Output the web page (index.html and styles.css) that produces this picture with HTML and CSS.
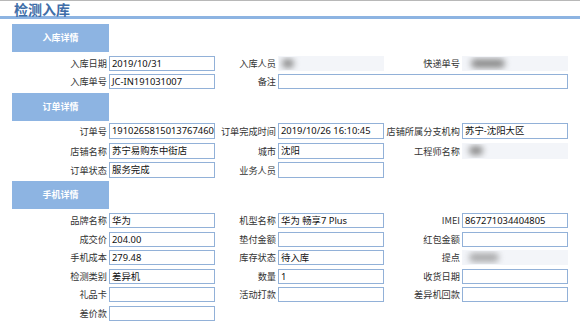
FILE: index.html
```html
<!DOCTYPE html>
<html lang="zh-CN">
<head>
    <meta charset="UTF-8">
    <title>检测入库</title>
    <link rel="stylesheet" href="styles.css">
</head>
<body>

    <div class="title">检测入库</div>

    <div class="section sec-store">
        <div class="sec-head">入库详情</div>
        <div class="grid">
            <span class="lbl">入库日期</span><div class="val">2019/10/31</div>
            <span class="lbl">入库人员</span><div class="val masked"><span class="smudge s1"></span></div>
            <span class="lbl">快递单号</span><div class="val masked"><span class="smudge s2"></span></div>

            <span class="lbl">入库单号</span><div class="val">JC-IN191031007</div>
            <span class="lbl">备注</span><div class="val wide"></div>
        </div>
    </div>

    <div class="section sec-order">
        <div class="sec-head">订单详情</div>
        <div class="grid">
            <span class="lbl">订单号</span><div class="val">1910265815013767460</div>
            <span class="lbl">订单完成时间</span><div class="val">2019/10/26 16:10:45</div>
            <span class="lbl">店铺所属分支机构</span><div class="val">苏宁-沈阳大区</div>

            <span class="lbl">店铺名称</span><div class="val">苏宁易购东中街店</div>
            <span class="lbl">城市</span><div class="val">沈阳</div>
            <span class="lbl">工程师名称</span><div class="val masked"><span class="smudge s3"></span></div>

            <span class="lbl">订单状态</span><div class="val">服务完成</div>
            <span class="lbl">业务人员</span><div class="val"></div>
        </div>
    </div>

    <div class="section sec-phone">
        <div class="sec-head">手机详情</div>
        <div class="grid">
            <span class="lbl">品牌名称</span><div class="val">华为</div>
            <span class="lbl">机型名称</span><div class="val">华为 畅享7 Plus</div>
            <span class="lbl">IMEI</span><div class="val">867271034404805</div>

            <span class="lbl">成交价</span><div class="val">204.00</div>
            <span class="lbl">垫付金额</span><div class="val"></div>
            <span class="lbl">红包金额</span><div class="val"></div>

            <span class="lbl">手机成本</span><div class="val">279.48</div>
            <span class="lbl">库存状态</span><div class="val">待入库</div>
            <span class="lbl">提点</span><div class="val masked"><span class="smudge s4"></span></div>

            <span class="lbl">检测类别</span><div class="val">差异机</div>
            <span class="lbl">数量</span><div class="val">1</div>
            <span class="lbl">收货日期</span><div class="val"></div>

            <span class="lbl">礼品卡</span><div class="val"></div>
            <span class="lbl">活动打款</span><div class="val"></div>
            <span class="lbl">差异机回款</span><div class="val"></div>

            <span class="lbl">差价款</span><div class="val"></div>
        </div>
    </div>

</body>
</html>
```

FILE: styles.css
```css
body {
    margin: 0;
    padding: 0;
    background-color: #fff;
    color: #222;
    font-family: "Noto Sans", "Noto Sans CJK SC", sans-serif;
    overflow: hidden;
}
.title {
    border-top: 1px solid #b8b8b8;
    border-bottom: 3px solid #8db4e2;
    height: 15px;
    line-height: 16px;
    padding-left: 14px;
    font-size: 14px;
    font-weight: bold;
    color: #3f6ea8;
    font-family: "Noto Sans CJK SC", sans-serif;
}
.sec-head {
    margin-left: 12px;
    width: 97px;
    height: 28px;
    line-height: 28px;
    background-color: #8db4e2;
    color: #fff;
    font-size: 9px;
    font-weight: bold;
    text-align: center;
    font-family: "Noto Sans CJK SC", sans-serif;
    margin-bottom: 4px;
}
.grid {
    display: grid;
    grid-template-columns: 109px 106px 63px 106px 78px 106px;
    grid-auto-rows: 15px;
    row-gap: 3px;
}
.sec-store {
    margin-top: 5px;
}
.sec-order {
    margin-top: 4px;
}
.sec-order .sec-head {
    margin-bottom: 2px;
}
.sec-order .grid {
    grid-auto-rows: 16px;
    row-gap: 3.5px;
}
.sec-phone {
    margin-top: 3px;
}
.sec-phone .grid {
    row-gap: 3.6px;
}
.lbl {
    text-align: right;
    padding-right: 2px;
    font-size: 9.2px;
    line-height: 15px;
    white-space: nowrap;
    color: #333;
    font-family: "Noto Sans CJK SC", sans-serif;
}
.sec-order .lbl {
    line-height: 16px;
}
.val {
    box-sizing: border-box;
    border: 1px solid #92b1d8;
    background-color: #fff;
    padding-left: 2px;
    font-size: 9.4px;
    line-height: 13px;
    white-space: nowrap;
    overflow: hidden;
    color: #111;
}
.sec-order .val {
    line-height: 14px;
}
.val.wide {
    grid-column: 4 / 7;
}
.val.masked {
    border-color: transparent;
    background-color: #f3f5f9;
}
.smudge {
    display: inline-block;
    height: 9px;
    margin-top: 2px;
    background-color: #8a8a8a;
    border-radius: 5px;
    filter: blur(3px);
}
.s1 {
    width: 12px;
    margin-left: 1px;
}
.s2 {
    width: 34px;
    margin-left: 6px;
}
.s3 {
    width: 14px;
    margin-left: 4px;
}
.s4 {
    width: 30px;
    margin-left: 4px;
    opacity: 0.7;
}
```
